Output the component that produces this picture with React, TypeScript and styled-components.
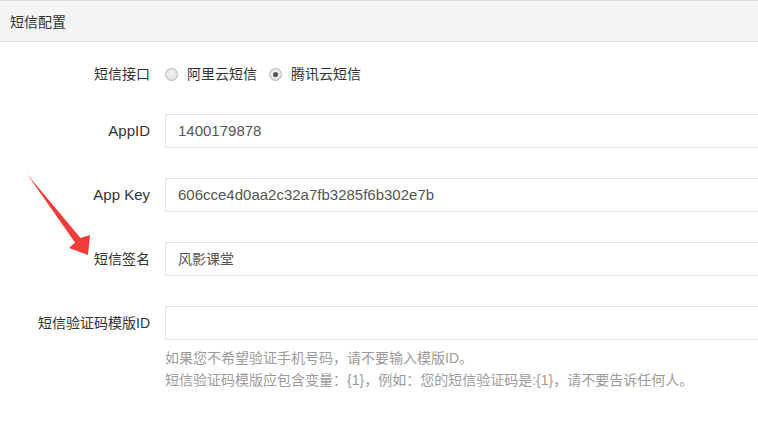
import React from "react";
import styled, { createGlobalStyle } from "styled-components";

const Global = createGlobalStyle`
  html, body { margin: 0; padding: 0; background: #fff; }
  body {
    width: 758px;
    height: 426px;
    overflow: hidden;
    font-family: "Liberation Sans", "Noto Sans CJK SC", sans-serif;
    color: #333;
  }
`;

const Panel = styled.div`
  position: relative;
  width: 758px;
  height: 426px;
  overflow: hidden;
`;

const Header = styled.div`
  height: 40px;
  border-top: 1px solid #dedede;
  border-bottom: 1px solid #dedede;
  background: #f4f4f4;
  display: flex;
  align-items: center;
  padding-left: 10px;
  font-size: 14px;
  color: #333;
`;

const Form = styled.div`
  padding-top: 22px;
  display: flex;
  flex-direction: column;
  gap: 30px;
`;

const Row = styled.div<{ $h: number }>`
  display: flex;
  align-items: flex-start;
  height: ${(p) => p.$h}px;
`;

const Label = styled.div<{ $h: number }>`
  width: 150px;
  flex: none;
  text-align: right;
  font-size: 14px;
  line-height: ${(p) => p.$h}px;
  color: #333;
  white-space: nowrap;
`;

const Latin = styled.span`
  font-size: 15px;
`;

const Control = styled.div`
  flex: 1;
  margin-left: 15px;
  margin-right: -20px;
  display: flex;
  flex-direction: column;
`;

const Radios = styled.div`
  display: flex;
  align-items: center;
  height: 20px;
  gap: 12px;
`;

const RadioItem = styled.label`
  display: flex;
  align-items: center;
  gap: 9px;
  font-size: 14px;
  color: #333;
  line-height: 20px;
`;

const RadioDot = styled.span<{ $checked?: boolean }>`
  width: 11px;
  height: 11px;
  border-radius: 50%;
  border: 1px solid #b5b5b5;
  background: radial-gradient(circle at 50% 35%, #f4f4f4, #dcdcdc);
  display: flex;
  align-items: center;
  justify-content: center;
  &::after {
    content: "";
    display: ${(p) => (p.$checked ? "block" : "none")};
    width: 5px;
    height: 5px;
    border-radius: 50%;
    background: #555;
  }
`;

const Input = styled.div`
  box-sizing: border-box;
  height: 34px;
  border: 1px solid #e4e4e4;
  padding: 0 12px;
  font-size: 14px;
  line-height: 32px;
  color: #555;
  white-space: nowrap;
`;

const Help = styled.div`
  margin-top: 7px;
  font-size: 14px;
  line-height: 22px;
  color: #9c9c9c;
  white-space: nowrap;
`;

const Arrow = styled.svg`
  position: absolute;
  left: 0;
  top: 0;
  pointer-events: none;
`;

export default function App() {
  return (
    <>
      <Global />
      <Panel>
        <Header>短信配置</Header>
        <Form>
          <Row $h={20}>
            <Label $h={20}>短信接口</Label>
            <Control>
              <Radios>
                <RadioItem>
                  <RadioDot />
                  阿里云短信
                </RadioItem>
                <RadioItem>
                  <RadioDot $checked />
                  腾讯云短信
                </RadioItem>
              </Radios>
            </Control>
          </Row>
          <Row $h={34}>
            <Label $h={34}>
              <Latin>AppID</Latin>
            </Label>
            <Control>
              <Input>
                <Latin>1400179878</Latin>
              </Input>
            </Control>
          </Row>
          <Row $h={34}>
            <Label $h={34}>
              <Latin>App Key</Latin>
            </Label>
            <Control>
              <Input>
                <Latin>606cce4d0aa2c32a7fb3285f6b302e7b</Latin>
              </Input>
            </Control>
          </Row>
          <Row $h={34}>
            <Label $h={34}>短信签名</Label>
            <Control>
              <Input>风影课堂</Input>
            </Control>
          </Row>
          <Row $h={34}>
            <Label $h={34}>短信验证码模版ID</Label>
            <Control>
              <Input />
              <Help>
                如果您不希望验证手机号码，请不要输入模版ID。
                <br />
                短信验证码模版应包含变量：{"{1}"}，例如：您的短信验证码是:{"{1}"}，请不要告诉任何人。
              </Help>
            </Control>
          </Row>
        </Form>
        <Arrow width="758" height="426" viewBox="0 0 758 426">
          <polygon
            points="27,174 80.5,238 90,235 88,255 69,248 75,242.5"
            fill="#f33b3b"
          />
        </Arrow>
      </Panel>
    </>
  );
}
